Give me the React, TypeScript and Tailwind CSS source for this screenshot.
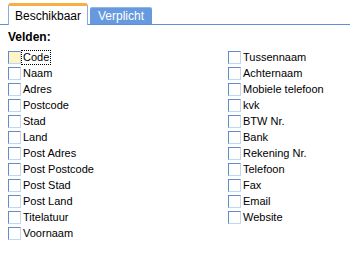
import React from "react";

const leftFields = [
  "Code",
  "Naam",
  "Adres",
  "Postcode",
  "Stad",
  "Land",
  "Post Adres",
  "Post Postcode",
  "Post Stad",
  "Post Land",
  "Titelatuur",
  "Voornaam",
];

const rightFields = [
  "Tussennaam",
  "Achternaam",
  "Mobiele telefoon",
  "kvk",
  "BTW Nr.",
  "Bank",
  "Rekening Nr.",
  "Telefoon",
  "Fax",
  "Email",
  "Website",
];

const Field: React.FC<{ label: string; focused?: boolean }> = ({ label, focused }) => (
  <div className="flex items-center h-[16px]">
    <div
      className={`w-[13px] h-[13px] border border-t-[#5f8bd2] border-l-[#5f8bd2] border-r-[#c4d5f1] border-b-[#c4d5f1] ${
        focused ? "bg-[#fff4c4]" : "bg-white"
      }`}
    ></div>
    <span
      className={`ml-[1px] px-[1px] leading-[13px] ${
        focused ? "outline outline-1 outline-dotted outline-black" : ""
      }`}>
      {label}
    </span>
  </div>
);

const App: React.FC = () => {
  return (
    <div className="w-[350px] h-[260px] bg-white text-[11px] text-black font-['Liberation_Sans',Arial,sans-serif]">
      <div className="flex items-end h-[25px] pl-[8px] border-b border-[#5b8fd8]">
        <div className="w-[80px] h-[22px] -mb-px bg-white border-t-[3px] border-t-[#f6b041] border-x border-x-[#8aaae0] rounded-t-[3px] flex items-center justify-center text-[12px]">
          Beschikbaar
        </div>
        <div className="ml-[2px] w-[62px] h-[17px] bg-[#6699dd] border-t border-t-[#8fb4e8] rounded-t-[2px] flex items-center justify-center text-white text-[12px]">
          Verplicht
        </div>
      </div>

      <div className="pl-[8px] pt-[5px]">
        <div className="font-bold text-[12px] leading-[14px]">Velden:</div>
        <div className="grid grid-cols-[220px_1fr] mt-[5px]">
          <div className="flex flex-col">
            {leftFields.map((f, i) => (
              <Field key={f} label={f} focused={i === 0} />
            ))}
          </div>
          <div className="flex flex-col">
            {rightFields.map((f) => (
              <Field key={f} label={f} />
            ))}
          </div>
        </div>
      </div>
    </div>
  );
};

export default App;
